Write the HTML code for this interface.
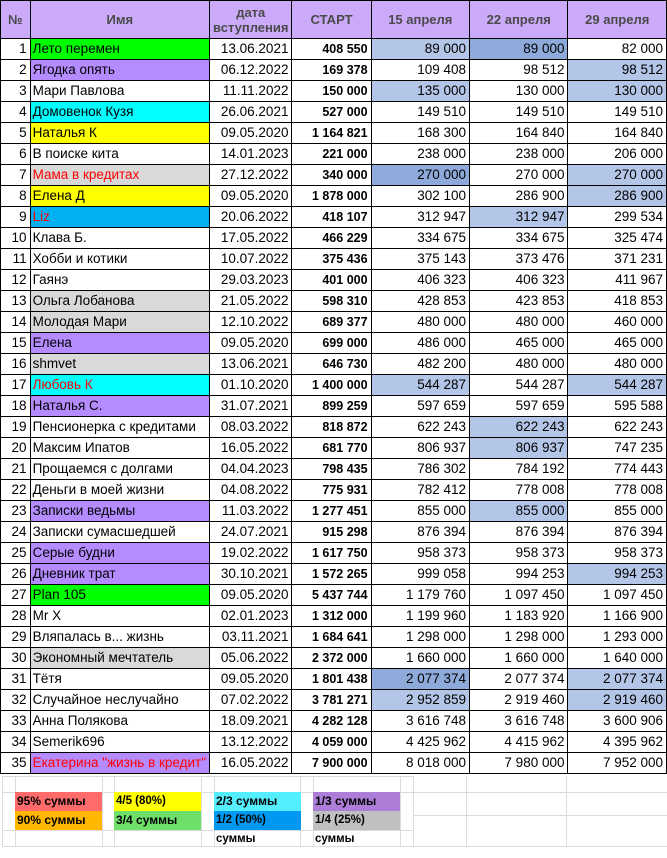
<!DOCTYPE html><html><head><meta charset="utf-8"><style>
body{margin:0;width:667px;height:858px;background:#fff;font-family:"Liberation Sans",sans-serif;position:relative;overflow:hidden}
table{border-collapse:collapse;table-layout:fixed;position:absolute;left:0;top:0}
td,th{border:1px solid #000;padding:0 3px;height:20px;font-size:13.5px;white-space:nowrap;overflow:hidden;line-height:20px}
th{background:#cbaaf9;color:#4a4a4a;font-size:13px;height:37px;line-height:15px;font-weight:bold}
td{text-align:right}td.n{text-align:left;padding-left:2px}td.s{font-weight:bold;font-size:12.5px}
.g{background:#00ff00}.p{background:#b58cff}.c{background:#00ffff}.y{background:#ffff00}.r{background:#d9d9d9}.b{background:#00b0f0}.red{color:#ff0000}
.l{background:#b4c6e7}.d{background:#8eaadb}
.lg{position:absolute;font-size:12px;font-weight:bold;height:19px;line-height:19px;padding-left:2px;box-sizing:border-box}
.gl{position:absolute;background:#dcdcdc}
</style></head><body>
<div class="gl" style="left:2px;top:776px;width:1px;height:70px"></div>
<div class="gl" style="left:2px;top:846px;width:665px;height:1px"></div>
<div class="gl" style="left:2px;top:776px;width:411px;height:1px"></div>
<div class="gl" style="left:2px;top:792px;width:665px;height:1px"></div>
<div class="gl" style="left:2px;top:830px;width:411px;height:1px"></div>
<div class="gl" style="left:413px;top:815px;width:254px;height:1px"></div>
<div class="gl" style="left:413px;top:776px;width:1px;height:70px"></div>
<div class="gl" style="left:15px;top:776px;width:1px;height:70px"></div>
<div class="gl" style="left:102px;top:776px;width:1px;height:70px"></div>
<div class="gl" style="left:114px;top:776px;width:1px;height:70px"></div>
<div class="gl" style="left:201px;top:776px;width:1px;height:70px"></div>
<div class="gl" style="left:214px;top:776px;width:1px;height:70px"></div>
<div class="gl" style="left:300px;top:776px;width:1px;height:70px"></div>
<div class="gl" style="left:313px;top:776px;width:1px;height:70px"></div>
<div class="gl" style="left:400px;top:776px;width:1px;height:70px"></div>
<div class="gl" style="left:466px;top:776px;width:1px;height:70px"></div>
<div class="gl" style="left:566px;top:776px;width:1px;height:70px"></div>
<div class="lg" style="left:15px;top:792px;width:87px;background:#ff6b6b">95% суммы</div>
<div class="lg" style="left:15px;top:811px;width:87px;background:#ffb700">90% суммы</div>
<div class="lg" style="left:114px;top:792px;width:87px;background:#ffff00;font-size:11.5px">4/5 (80%) суммы</div>
<div class="lg" style="left:114px;top:811px;width:87px;background:#6ee06a">3/4 суммы</div>
<div class="lg" style="left:214px;top:792px;width:87px;background:#55eeff">2/3 суммы</div>
<div class="lg" style="left:214px;top:811px;width:87px;background:#0098f0;font-size:11.5px">1/2 (50%) суммы</div>
<div class="lg" style="left:313px;top:792px;width:87px;background:#ad7ed8">1/3 суммы</div>
<div class="lg" style="left:313px;top:811px;width:87px;background:#c0c0c0;font-size:11.5px">1/4 (25%) суммы</div>
<table>
<colgroup><col style="width:30px"><col style="width:177px"><col style="width:79px"><col style="width:80px"><col style="width:100px"><col style="width:100px"><col style="width:100px"></colgroup>
<tr><th>№</th><th>Имя</th><th style="font-weight:bold">дата<br>вступления</th><th>СТАРТ</th><th>15 апреля</th><th>22 апреля</th><th>29 апреля</th></tr>
<tr><td>1</td><td class="n g">Лето перемен</td><td>13.06.2021</td><td class="s">408 550</td><td class="l">89 000</td><td class="d">89 000</td><td>82 000</td></tr>
<tr><td>2</td><td class="n p">Ягодка опять</td><td>06.12.2022</td><td class="s">169 378</td><td>109 408</td><td>98 512</td><td class="l">98 512</td></tr>
<tr><td>3</td><td class="n">Мари Павлова</td><td>11.11.2022</td><td class="s">150 000</td><td class="l">135 000</td><td>130 000</td><td class="l">130 000</td></tr>
<tr><td>4</td><td class="n c">Домовенок Кузя</td><td>26.06.2021</td><td class="s">527 000</td><td>149 510</td><td>149 510</td><td>149 510</td></tr>
<tr><td>5</td><td class="n y">Наталья К</td><td>09.05.2020</td><td class="s">1 164 821</td><td>168 300</td><td>164 840</td><td>164 840</td></tr>
<tr><td>6</td><td class="n">В поиске кита</td><td>14.01.2023</td><td class="s">221 000</td><td>238 000</td><td>238 000</td><td>206 000</td></tr>
<tr><td>7</td><td class="n r red">Мама в кредитах</td><td>27.12.2022</td><td class="s">340 000</td><td class="d">270 000</td><td>270 000</td><td class="l">270 000</td></tr>
<tr><td>8</td><td class="n y">Елена Д</td><td>09.05.2020</td><td class="s">1 878 000</td><td>302 100</td><td>286 900</td><td class="l">286 900</td></tr>
<tr><td>9</td><td class="n b red">Liz</td><td>20.06.2022</td><td class="s">418 107</td><td>312 947</td><td class="l">312 947</td><td>299 534</td></tr>
<tr><td>10</td><td class="n">Клава Б.</td><td>17.05.2022</td><td class="s">466 229</td><td>334 675</td><td>334 675</td><td>325 474</td></tr>
<tr><td>11</td><td class="n">Хобби и котики</td><td>10.07.2022</td><td class="s">375 436</td><td>375 143</td><td>373 476</td><td>371 231</td></tr>
<tr><td>12</td><td class="n">Гаянэ</td><td>29.03.2023</td><td class="s">401 000</td><td>406 323</td><td>406 323</td><td>411 967</td></tr>
<tr><td>13</td><td class="n r">Ольга Лобанова</td><td>21.05.2022</td><td class="s">598 310</td><td>428 853</td><td>423 853</td><td>418 853</td></tr>
<tr><td>14</td><td class="n r">Молодая Мари</td><td>12.10.2022</td><td class="s">689 377</td><td>480 000</td><td>480 000</td><td>460 000</td></tr>
<tr><td>15</td><td class="n p">Елена</td><td>09.05.2020</td><td class="s">699 000</td><td>486 000</td><td>465 000</td><td>465 000</td></tr>
<tr><td>16</td><td class="n r">shmvet</td><td>13.06.2021</td><td class="s">646 730</td><td>482 200</td><td>480 000</td><td>480 000</td></tr>
<tr><td>17</td><td class="n c red">Любовь К</td><td>01.10.2020</td><td class="s">1 400 000</td><td class="l">544 287</td><td>544 287</td><td class="l">544 287</td></tr>
<tr><td>18</td><td class="n p">Наталья С.</td><td>31.07.2021</td><td class="s">899 259</td><td>597 659</td><td>597 659</td><td>595 588</td></tr>
<tr><td>19</td><td class="n">Пенсионерка с кредитами</td><td>08.03.2022</td><td class="s">818 872</td><td>622 243</td><td class="l">622 243</td><td>622 243</td></tr>
<tr><td>20</td><td class="n">Максим Ипатов</td><td>16.05.2022</td><td class="s">681 770</td><td>806 937</td><td class="l">806 937</td><td>747 235</td></tr>
<tr><td>21</td><td class="n">Прощаемся с долгами</td><td>04.04.2023</td><td class="s">798 435</td><td>786 302</td><td>784 192</td><td>774 443</td></tr>
<tr><td>22</td><td class="n">Деньги в моей жизни</td><td>04.08.2022</td><td class="s">775 931</td><td>782 412</td><td>778 008</td><td>778 008</td></tr>
<tr><td>23</td><td class="n p">Записки ведьмы</td><td>11.03.2022</td><td class="s">1 277 451</td><td>855 000</td><td class="l">855 000</td><td>855 000</td></tr>
<tr><td>24</td><td class="n">Записки сумасшедшей</td><td>24.07.2021</td><td class="s">915 298</td><td>876 394</td><td>876 394</td><td>876 394</td></tr>
<tr><td>25</td><td class="n p">Серые будни</td><td>19.02.2022</td><td class="s">1 617 750</td><td>958 373</td><td>958 373</td><td>958 373</td></tr>
<tr><td>26</td><td class="n p">Дневник трат</td><td>30.10.2021</td><td class="s">1 572 265</td><td>999 058</td><td>994 253</td><td class="l">994 253</td></tr>
<tr><td>27</td><td class="n g">Plan 105</td><td>09.05.2020</td><td class="s">5 437 744</td><td>1 179 760</td><td>1 097 450</td><td>1 097 450</td></tr>
<tr><td>28</td><td class="n">Mr X</td><td>02.01.2023</td><td class="s">1 312 000</td><td>1 199 960</td><td>1 183 920</td><td>1 166 900</td></tr>
<tr><td>29</td><td class="n">Вляпалась в... жизнь</td><td>03.11.2021</td><td class="s">1 684 641</td><td>1 298 000</td><td>1 298 000</td><td>1 293 000</td></tr>
<tr><td>30</td><td class="n r">Экономный мечтатель</td><td>05.06.2022</td><td class="s">2 372 000</td><td>1 660 000</td><td>1 660 000</td><td>1 640 000</td></tr>
<tr><td>31</td><td class="n">Тётя</td><td>09.05.2020</td><td class="s">1 801 438</td><td class="d">2 077 374</td><td>2 077 374</td><td class="l">2 077 374</td></tr>
<tr><td>32</td><td class="n">Случайное неслучайно</td><td>07.02.2022</td><td class="s">3 781 271</td><td class="l">2 952 859</td><td>2 919 460</td><td class="l">2 919 460</td></tr>
<tr><td>33</td><td class="n">Анна Полякова</td><td>18.09.2021</td><td class="s">4 282 128</td><td>3 616 748</td><td>3 616 748</td><td>3 600 906</td></tr>
<tr><td>34</td><td class="n">Semerik696</td><td>13.12.2022</td><td class="s">4 059 000</td><td>4 425 962</td><td>4 415 962</td><td>4 395 962</td></tr>
<tr><td>35</td><td class="n p red">Екатерина "жизнь в кредит"</td><td>16.05.2022</td><td class="s">7 900 000</td><td>8 018 000</td><td>7 980 000</td><td>7 952 000</td></tr>
</table>
</body></html>
